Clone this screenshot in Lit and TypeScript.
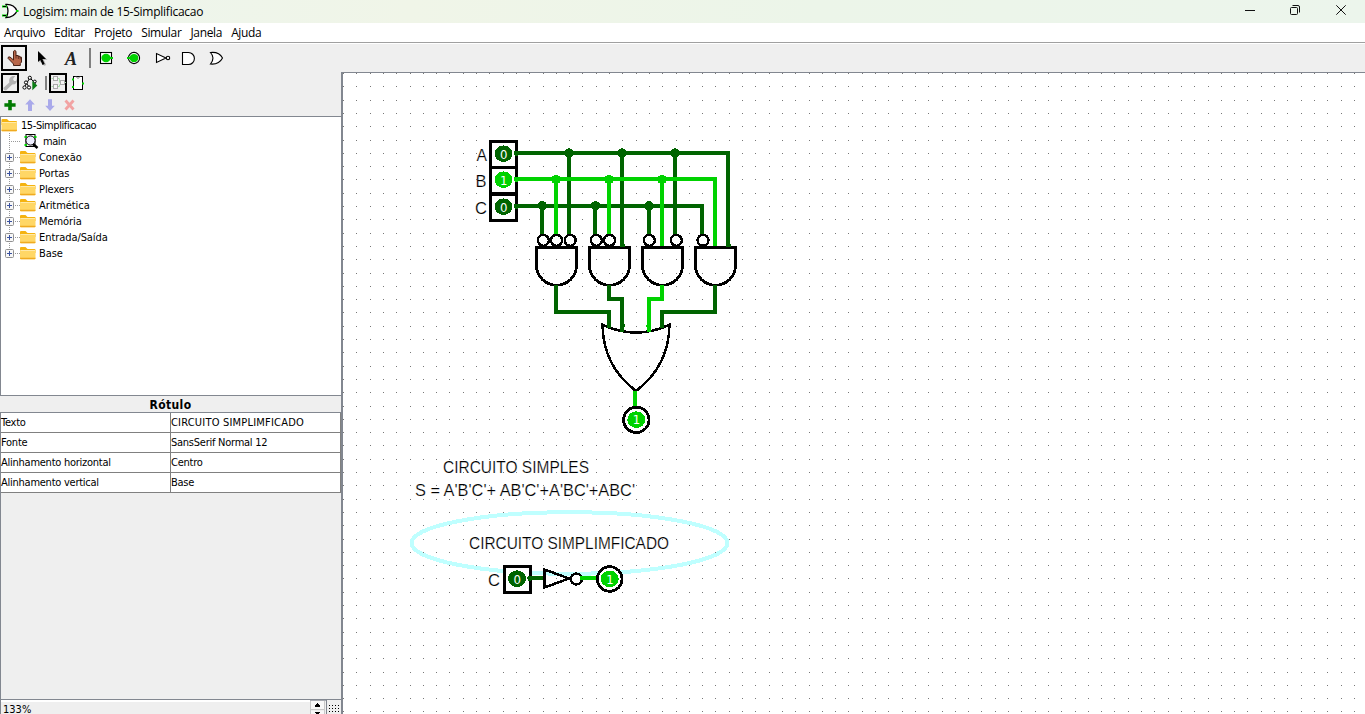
import { LitElement, html, svg, css } from "lit";
import { customElement } from "lit/decorators.js";

const ON = "#00d200";
const OFF = "#006400";

const MENUS = ["Arquivo", "Editar", "Projeto", "Simular", "Janela", "Ajuda"];
const LIBS = ["Conexão", "Portas", "Plexers", "Aritmética", "Memória", "Entrada/Saída", "Base"];
const ATTRS: [string, string, string][] = [
  ["Texto", "CIRCUITO SIMPLIMFICADO", "caps"],
  ["Fonte", "SansSerif Normal 12", ""],
  ["Alinhamento horizontal", "Centro", ""],
  ["Alinhamento vertical", "Base", ""],
];

@customElement("logisim-toolbar")
class LogisimToolbar extends LitElement {
  static styles = css`
    :host { display: block; height: 28px; background: #efefef; }
    .bar { display: flex; align-items: center; height: 28px; padding-left: 1px; }
    svg { display: block; flex: none; }
    .glyph { font: italic bold 18px "Liberation Serif", serif; }
  `;
  render() {
    return html`<div class="bar">
      <svg width="26" height="28" viewBox="1 44 26 28">
        <rect x="2" y="46" width="24" height="24" fill="none" stroke="#000" stroke-width="2" shape-rendering="crispEdges" />
        <path d="M13.5 60V51.3Q14.8 49.6 16 51.3V55.5H18.2V56.3H20V57.2H21.5V62L20.3 63.5V65.5H13.5V64L8 58.3Q7.9 56.3 10 57Z" fill="#b8674b" stroke="#4a2216" stroke-width="1" />
        <path d="M16 55V58.5M18.3 56V59M20.2 57V59.5" stroke="#4a2216" stroke-width=".8" />
      </svg>
      <svg width="62" height="28" viewBox="27 44 62 28">
        <path d="M39.5 52L47.5 60H43.9L46.2 65L44 66L41.8 61L39.5 63Z" fill="#bbb" />
        <path d="M38 51L46 59H42.4L44.7 64L42.5 65L40.3 60L38 62Z" fill="#000" />
        <text class="glyph" x="65" y="65" textLength="12" lengthAdjust="spacingAndGlyphs" fill="#222">A</text>
      </svg>
      <svg width="142" height="28" viewBox="89 44 142 28" fill="none" stroke="#000" stroke-width="1.1">
        <rect x="89" y="48" width="2" height="20" fill="#808080" stroke="none" />
        <rect x="100.5" y="52.5" width="11" height="11" fill="#fff" />
        <ellipse cx="106" cy="58" rx="4.6" ry="4.2" fill="${ON}" stroke="none" />
        <rect x="110" y="57" width="3" height="2" fill="${ON}" stroke="none" />
        <circle cx="134" cy="58" r="5.6" fill="#fff" />
        <ellipse cx="134" cy="58" rx="4.4" ry="4.1" fill="${ON}" stroke="none" />
        <rect x="127" y="57" width="3" height="2" fill="${ON}" stroke="none" />
        <path d="M156.5 53.5V62.5L166 58Z" fill="#fff" />
        <circle cx="168" cy="58" r="1.7" fill="#fff" />
        <path d="M182.5 52.5H188.5A5.9 6 0 0 1 188.5 64.5H182.5Z" fill="#fff" />
        <path d="M210.5 52.5Q219 51.5 222.5 58Q219 64.8 210.5 64Q215.5 58 210.5 52.5Z" fill="#fff" />
      </svg>
    </div>`;
  }
}

@customElement("project-explorer")
class ProjectExplorer extends LitElement {
  static styles = css`
    :host { display: flex; flex-direction: column; height: 324px; background: #efefef; font: 11px "DejaVu Sans Condensed", "DejaVu Sans", sans-serif; font-stretch: condensed; }
    svg { display: block; flex: none; }
    .tools { height: 44px; }
    .tree { height: 278px; background: #fff; border: 1px solid #828790; border-right: 0; }
    .row { display: flex; height: 16px; align-items: center; white-space: pre; letter-spacing: -0.42px; }
    .root { gap: 3px; }
    .label { line-height: 16px; padding-top: 2px; height: 16px; }
    .main { margin-left: 4px; }
    .lib { margin-left: 2px; letter-spacing: -0.07px; }
  `;
  folder(x: number) {
    return svg`<g transform="translate(${x} 0)">
      <path d="M0.5 3Q0.5 2 1.5 2H6L8 4H15Q16 4 16 5V8H0.5Z" fill="#f5b310"/>
      <rect x="0.5" y="5" width="15.5" height="9.3" rx="0.8" fill="#ffd766"/>
      <path d="M0.5 12.8H16V13.3Q16 14.3 15 14.3H1.5Q0.5 14.3 0.5 13.3Z" fill="#f0aa20"/>
      <path d="M1 5.5H15.5" stroke="#ffe9a8" stroke-width="1"/></g>`;
  }
  render() {
    return html`
      <svg class="tools" width="341" height="44" viewBox="0 72 341 44">
        <g fill="none" stroke="#000" stroke-width="2" shape-rendering="crispEdges">
          <rect x="2" y="74" width="16" height="18" /><rect x="50" y="74" width="16" height="18" />
        </g>
        <path d="M3.3 88L9.3 82.5Q8.3 77.5 12.5 76H15.3L13 79L14 80.9L16.2 80.9L17 78.5Q17.8 84.6 12.3 84.6L6 90.5Q3.5 90.5 3.3 88Z" fill="#b3b3b3" />
        <g fill="#fff" stroke="#000" stroke-width="1">
          <path d="M25 86L29.8 78L36 83.5M27 84L29 87" fill="none" />
          <circle cx="29.8" cy="77.8" r="1.6" /><circle cx="26" cy="82.5" r="1.6" /><circle cx="24.5" cy="87.5" r="1.6" /><circle cx="29" cy="87.5" r="1.6" /><circle cx="34.8" cy="81.5" r="1.4" />
        </g>
        <path d="M32.3 81V90.3L37.3 85.6Z" fill="#0a7d14" />
        <rect x="45" y="76" width="2" height="14" fill="#808080" />
        <g fill="#f6f6f6" stroke="#aaa" stroke-width="1">
          <rect x="53.5" y="76.5" width="4" height="4" /><rect x="53.5" y="84.5" width="4" height="4" /><rect x="60.5" y="80.5" width="4" height="4" />
          <path d="M58 78.5H59.5V82.5H60M58 86.5H59.5V84.5M51.5 78.5H53M51.5 86.5H53M65 82.5H66" fill="none" stroke="#a6dfa6" />
        </g>
        <rect x="73.5" y="76.5" width="9" height="13" fill="#fff" stroke="#000" />
        <path d="M76 76.5Q78 80 80 76.5" fill="none" stroke="#888" />
        <path d="M72 79.5H74M72 87H74M82 83.5H84" stroke="${ON}" stroke-width="2" />
        <path d="M8.2 100H11.8V103.3H15.6V106.8H11.8V110.3H8.2V106.8H4.4V103.3H8.2Z" fill="#007a00" />
        <path d="M30 99.3L34.8 104.4H32V111H28V104.4H25.2ZM50 110.9L54.8 105.8H52V99.3H48V105.8H45.2Z" fill="#a9a9ea" />
        <path d="M65.5 100.5L73.5 109.5M73.5 100.5L65.5 109.5" stroke="#f2a3a3" stroke-width="2.8" />
      </svg>
      <div class="tree">
        <div class="row root"><svg width="17" height="16">${this.folder(0)}</svg><span class="label">15-Simplificacao</span></div>
        <div class="row">
          <svg width="38" height="16">
            <path d="M8.5 0V16M10 8.5H20" stroke="#999" stroke-dasharray="1 1" />
            <rect x="25" y="1.5" width="9" height="12" fill="#fff" stroke="#000" />
            <path d="M23.5 4H26M23.5 12H26M33 4H35.5" stroke="${ON}" stroke-width="2" />
            <circle cx="29.5" cy="7.5" r="4.6" fill="#eef" stroke="#000" /><path d="M32 11L36.5 15" stroke="#000" stroke-width="2.5" />
          </svg><span class="label main">main</span>
        </div>
        ${LIBS.map((name, i) => html`<div class="row">
          <svg width="36" height="16">
            <path d="${i === LIBS.length - 1 ? "M8.5 0V8" : "M8.5 0V16"}M14 8.5H19" stroke="#999" stroke-dasharray="1 1" />
            <rect x="4.5" y="4.5" width="8" height="8" rx="1" fill="#f7f7f7" stroke="#919191" />
            <path d="M6 8.5H11M8.5 6V11" stroke="#3a52a0" />
            ${this.folder(18.5)}
          </svg><span class="label lib">${name}</span></div>`)}
      </div>`;
  }
}

@customElement("attribute-panel")
class AttributePanel extends LitElement {
  static styles = css`
    :host { display: flex; flex-direction: column; flex: 1; background: #efefef; font: 11px "DejaVu Sans Condensed", "DejaVu Sans", sans-serif; font-stretch: condensed; }
    .title { height: 16px; line-height: 18px; text-align: center; font-weight: bold; font-size: 12px; letter-spacing: 0.4px; }
    .grid { border-top: 1px solid #828790; border-left: 1px solid #828790; }
    .row { display: grid; grid-template-columns: 170px 170px; height: 20px; }
    .cell { background: #fff; border-right: 1px solid #808080; border-bottom: 1px solid #808080; line-height: 19px; white-space: pre; letter-spacing: -0.25px; }
    .caps { letter-spacing: 0.2px; }
    .fill { flex: 1; border-left: 1px solid #828790; border-bottom: 1px solid #828790; }
    .zoom { display: flex; height: 14px; border-left: 1px solid #828790; }
    .value { width: 309px; height: 14px; border-top: 2px solid #fff; line-height: 16px; box-sizing: border-box; padding-left: 2px; letter-spacing: 0; }
    svg { display: block; flex: none; }
  `;
  render() {
    return html`
      <div class="title">Rótulo</div>
      <div class="grid">${ATTRS.map(([k, v, c]) => html`<div class="row"><div class="cell">${k}</div><div class="cell ${c}">${v}</div></div>`)}</div>
      <div class="fill"></div>
      <div class="zoom">
        <div class="value">133%</div>
        <svg width="31" height="14" viewBox="310 700 31 14" shape-rendering="crispEdges">
          <path d="M310 700.5H326" stroke="#a8abb2" />
          <rect x="310" y="701" width="15" height="9" fill="#f8f8f8" /><rect x="310" y="711" width="15" height="3" fill="#f8f8f8" />
          <path d="M310.5 701V714M310 709.5H325M324.5 701V714" stroke="#c8c8c8" />
          <path d="M317 703H318V704H319V705H320V707H315V705H316V704H317Z" fill="#000" />
          <path d="M315 712H320V713H319V714H316V713H315Z" fill="#000" />
          <path d="M326.5 700V714" stroke="#828790" />
          <path d="M329 705.5H340M329 708.5H340M329 711.5H340" stroke="#000" stroke-dasharray="1 2" />
        </svg>
      </div>`;
  }
}

@customElement("circuit-canvas")
class CircuitCanvas extends LitElement {
  static styles = css`
    :host { display: block; flex: 1; background: #fff; border-top: 1px solid #828790; }
    svg { display: block; }
    .label { font: 16px "Liberation Sans", Arial, sans-serif; fill: #000; stroke: #fff; stroke-width: 0.2px; }
    .digit { font: 13px "DejaVu Sans Condensed", "DejaVu Sans", sans-serif; font-stretch: condensed; fill: #fff; text-anchor: middle; }
  `;
  dots() {
    let d = "";
    for (let j = 0; j <= 48; j++)
      for (let i = 0; i <= 76; i++) d += `M${343 + Math.round(13.3 * i)} ${73 + Math.round(13.3 * j)}h1v1h-1z`;
    return d;
  }
  wire(color: string, d: string) {
    return svg`<path d=${d} fill="none" stroke=${color} stroke-width="4"/>`;
  }
  value(x: number, y: number, on: boolean) {
    return svg`<ellipse cx=${x} cy=${y} rx="9" ry="8.3" fill=${on ? ON : OFF}/><text class="digit" x=${x + 0.2} y=${y + 4.8}>${on ? 1 : 0}</text>`;
  }
  input(x: number, y: number, on: boolean) {
    return svg`<rect x=${x - 13} y=${y - 12.5} width="26" height="26" fill="#fff" stroke="#000" stroke-width="3"/>
      ${this.value(x, y - 0.3, on)}<circle cx=${x + 13} cy=${y - 0.7} r="2.6" fill=${on ? ON : OFF}/>`;
  }
  bubble(x: number, y: number) {
    return svg`<circle cx=${x} cy=${y} r="5.5" fill="#fff" stroke="#000" stroke-width="2.4"/>`;
  }
  output(x: number, y: number, r: number) {
    return svg`<circle cx=${x} cy=${y} r=${r} fill="#fff" stroke="#000" stroke-width="2.8"/>${this.value(x, y - 0.2, true)}`;
  }
  text(x: number, y: number, w: number, s: string) {
    return svg`<text class="label" x=${x} y=${y} textLength=${w} lengthAdjust="spacingAndGlyphs">${s}</text>`;
  }
  render() {
    const gates = [556.5, 609.5, 662.5, 715.5];
    const bubbles = [543.3, 556.5, 570.2, 596.3, 609.5, 649.3, 676.3, 703];
    return html`<svg width="1022" height="641" viewBox="343 73 1022 641" shape-rendering="crispEdges">
      <path d=${this.dots()} fill="#777" />
      <ellipse cx="569.5" cy="543" rx="158" ry="30.8" fill="none" stroke="#bfffff" stroke-width="4" />
      ${this.wire(OFF, "M516 153H730M569 153V234M622 153V247M675 153V234M728 153V247")}
      ${this.wire(OFF, "M516 206H704M542 206V234M595 206V234M649 206V234M702 206V234")}
      ${this.wire(ON, "M516 179H717M556 179V234M609 179V234M662 179V247M715 179V247")}
      ${this.wire(OFF, "M569 181V234M622 181V247M675 181V234")}
      ${[569, 622, 675].map((x) => svg`<circle cx=${x + 0.3} cy="153" r="4.7" fill=${OFF}/>`)}
      ${[556, 609, 662].map((x) => svg`<circle cx=${x} cy="179.5" r="4.7" fill=${ON}/>`)}
      ${[542.4, 595.5, 649].map((x) => svg`<circle cx=${x} cy="205.8" r="4.7" fill=${OFF}/>`)}
      ${this.input(503.5, 154, false)}${this.input(503.5, 180, true)}${this.input(503.5, 207, false)}
      ${bubbles.map((x) => this.bubble(x, 240.3))}
      ${gates.map((x) => svg`<path d="M${x - 20} 247.5H${x + 20}V265.5A20 19.7 0 0 1 ${x - 20} 265.5Z" fill="none" stroke="#000" stroke-width="2.8"/>`)}
      <path d="M602.5 324.7Q636 340.5 669.5 324.7Q669 366 636 391Q603 366 602.5 324.7Z" fill="none" stroke="#000" stroke-width="2.5" />
      ${this.wire(OFF, "M556 285V312H609V328M609 285V299H622V332M715 285V312H662V328")}
      ${this.wire(ON, "M662 285V299H649V332M635 391V408")}
      <path d="M620 325.5H625M620 245h5M726 245h5" stroke=${OFF} stroke-width="3" />
      <path d="M646 325.5H651" stroke=${ON} stroke-width="2" />
      ${this.output(636.3, 419.8, 12.7)}
      ${this.wire(OFF, "M529 578H545")}${this.wire(ON, "M580 578H598")}
      ${this.input(517, 579, false)}
      <path d="M544.5 569.5V587.5L569 578.5Z" fill="none" stroke="#000" stroke-width="2.5" />
      ${this.bubble(576.3, 579)}
      <circle cx="582" cy="578" r="2.5" fill=${ON} />
      ${this.output(609.7, 579, 12.3)}
      ${this.text(476.5, 161, 10.5, "A")}${this.text(475.5, 187, 11, "B")}${this.text(475, 214, 12, "C")}${this.text(488, 586, 12, "C")}
      ${this.text(443, 473, 146, "CIRCUITO SIMPLES")}
      ${this.text(415, 496, 220, "S = A'B'C'+ AB'C'+A'BC'+ABC'")}
      ${this.text(469, 549, 200, "CIRCUITO SIMPLIMFICADO")}
    </svg>`;
  }
}

@customElement("app-root")
class AppRoot extends LitElement {
  static styles = css`
    :host { display: flex; flex-direction: column; width: 1365px; height: 714px; overflow: hidden; background: #fff; color: #000; }
    .titlebar { display: flex; height: 23px; align-items: center; background: linear-gradient(90deg, #edf5ed, #f0f5e8 30%, #ecf5e9 60%, #ecf5ec); font: 12px/23px "Open Sans", "Noto Sans", sans-serif; }
    .title { flex: 1; margin-left: 4px; letter-spacing: -0.25px; }
    .menu { display: flex; gap: 9px; height: 19px; padding-left: 4px; font: 12px/19px "Open Sans", "Noto Sans", sans-serif; letter-spacing: -0.34px; border-bottom: 1px solid #a0a0a0; margin-bottom: 1px; }
    .body { display: flex; flex: 1; min-height: 0; }
    .side { display: flex; flex-direction: column; width: 341px; border-right: 2px solid #828790; }
    svg { display: block; flex: none; }
  `;
  render() {
    return html`
      <div class="titlebar">
        <svg width="19" height="23">
          <path d="M6 4.5Q14 4 17 11Q14 17.5 6 17.5Q10 11 6 4.5Z" fill="#fff" stroke="#000" stroke-width="1.3" />
          <path d="M2 6.5H7M2 15.5H7M16 11H18.5" stroke="${ON}" stroke-width="2" /><path d="M3 6.5H6M3 15.5H6" stroke="#000" />
        </svg>
        <span class="title">Logisim: main de 15-Simplificacao</span>
        <svg width="125" height="23" viewBox="1240 0 125 23" fill="none" stroke="#111">
          <path d="M1245 10.5H1255" />
          <rect x="1290.5" y="7.5" width="7" height="7" rx="1" /><path d="M1292.5 5.5H1298Q1299.5 5.5 1299.5 7V12.5" />
          <path d="M1336.3 5.3L1345.7 14.7M1345.7 5.3L1336.3 14.7" />
        </svg>
      </div>
      <div class="menu">${MENUS.map((m) => html`<span>${m}</span>`)}</div>
      <logisim-toolbar></logisim-toolbar>
      <div class="body">
        <div class="side"><project-explorer></project-explorer><attribute-panel></attribute-panel></div>
        <circuit-canvas></circuit-canvas>
      </div>`;
  }
}
